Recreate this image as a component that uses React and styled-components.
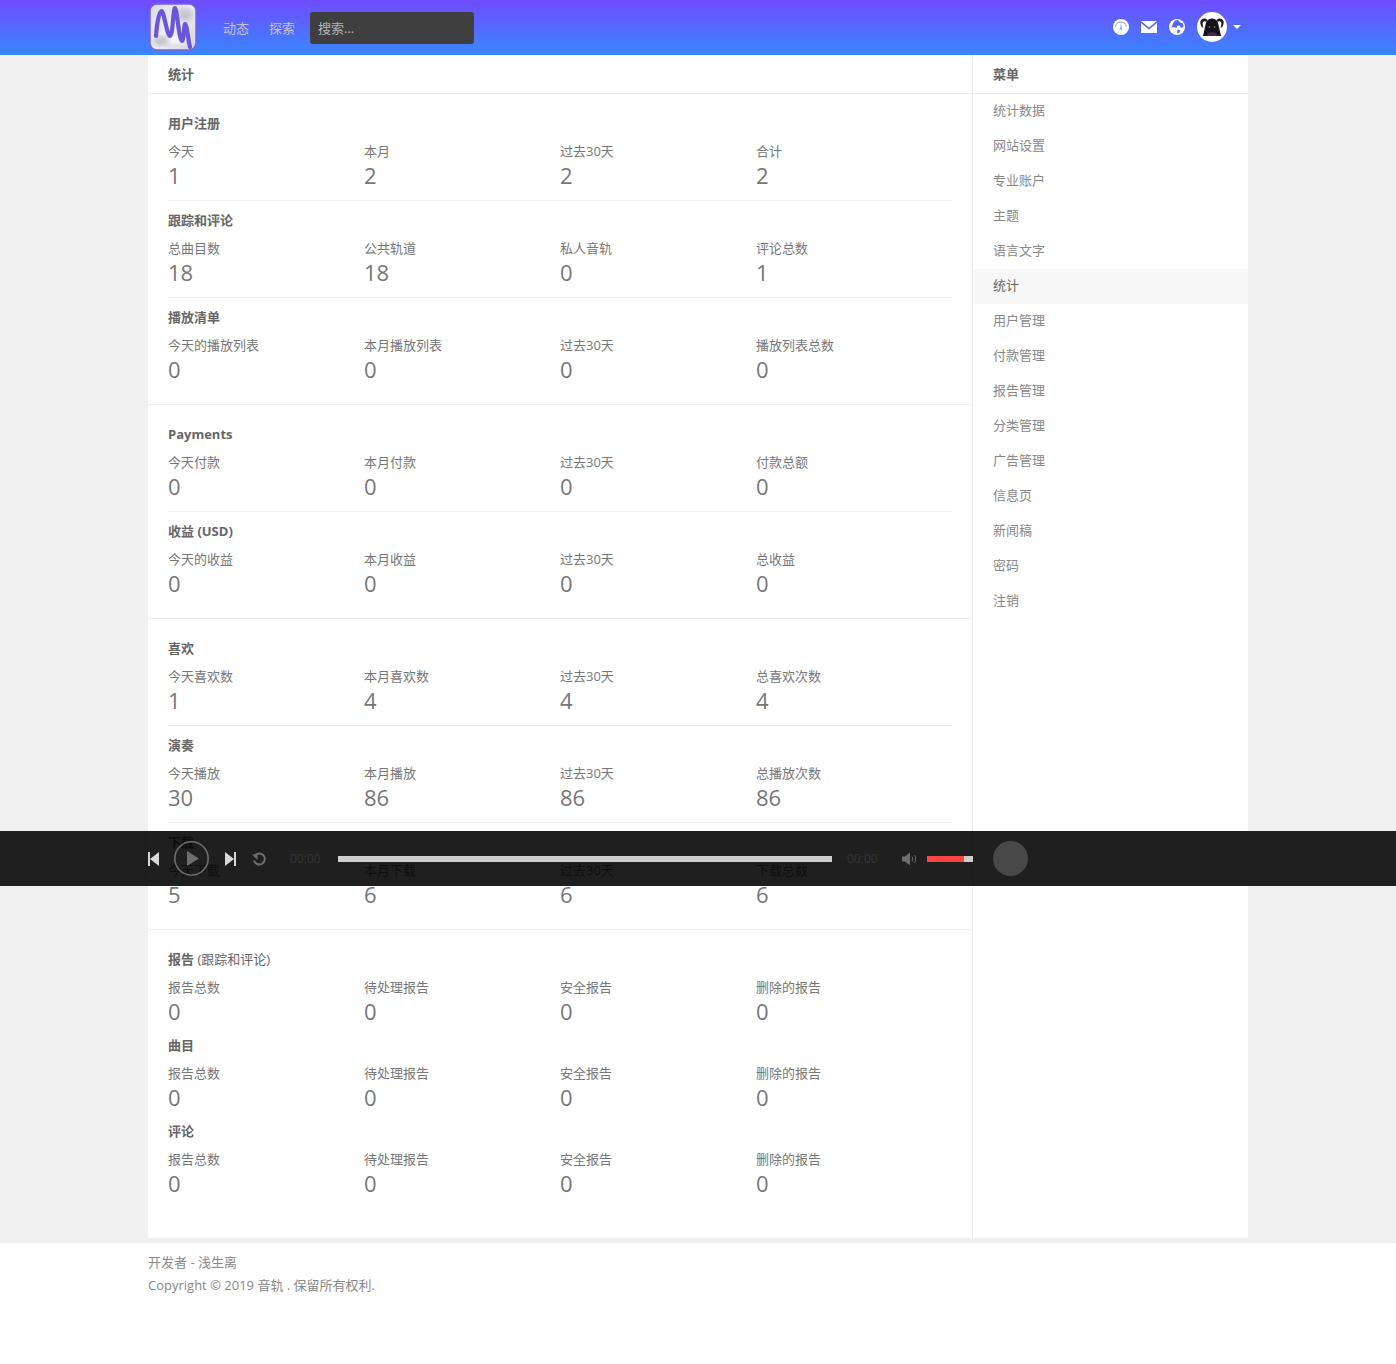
import React from "react";
import styled, { createGlobalStyle } from "styled-components";

const Global = createGlobalStyle`
  html, body { margin: 0; padding: 0; background: #fff; }
  body { font-family: "Open Sans", "Noto Sans CJK SC", sans-serif; font-size: 13px; color: #666; }
  * { box-sizing: border-box; }
`;

const Page = styled.div`
  position: relative;
  min-height: 1364px;
  background: #fff;
`;
const HeaderBar = styled.header`
  height: 55px;
  background: linear-gradient(to bottom, #704bff, #3887ff);
`;
const HeaderInner = styled.div`
  width: 1100px;
  height: 55px;
  margin: 0 auto;
  display: flex;
  align-items: center;
  padding-left: 1px;
  padding-right: 7px;
`;
const Logo = styled.svg`
  width: 48px;
  height: 48px;
  margin-right: 26px;
  margin-bottom: 1px;
  flex: none;
`;
const NavLink = styled.a`
  color: #c4c4d0;
  font-size: 13px;
  line-height: 18px;
  margin-right: 20px;
  margin-top: 1px;
`;
const Search = styled.div`
  width: 164px;
  height: 32px;
  margin-left: -5px;
  background: #3f3f3f;
  border-radius: 3px;
  color: #b4b4b4;
  font-size: 13px;
  line-height: 33px;
  padding-left: 8px;
`;
const HeaderRight = styled.div`
  margin-left: auto;
  margin-bottom: 1px;
  display: flex;
  align-items: center;
  gap: 12px;
`;
const TopIcon = styled.svg`
  width: 16px;
  height: 16px;
  display: block;
`;
const UserMenu = styled.div`
  display: flex;
  align-items: center;
  gap: 6px;
`;
const Avatar = styled.svg`
  width: 30px;
  height: 30px;
  display: block;
`;
const Caret = styled.span`
  width: 0;
  height: 0;
  border-left: 4px solid transparent;
  border-right: 4px solid transparent;
  border-top: 4px solid #fff;
`;

const Backdrop = styled.div`
  background: #f0f0f0;
  padding-bottom: 5px;
`;
const Layout = styled.div`
  width: 1100px;
  margin: 0 auto;
  display: flex;
  background: #fff;
`;
const Main = styled.main`
  width: 825px;
  border-right: 1px solid #efefef;
`;
const Side = styled.aside`
  width: 275px;
`;
const PanelTitle = styled.div`
  height: 39px;
  line-height: 38px;
  padding-left: 20px;
  font-weight: 700;
  font-size: 13px;
  color: #666;
  border-bottom: 1px solid #efefef;
`;
const Section = styled.section`
  padding: 10px 20px ${(p) => (p.$last ? "40px" : "10px")};
  border-bottom: ${(p) => (p.$last ? "none" : "1px solid #efefef")};
`;
const Group = styled.div`
  padding: 9px 0 ${(p) => (p.$compact ? "1px" : "11px")};
  border-bottom: ${(p) => (p.$rule ? "1px solid #efefef" : "none")};
`;
const GroupTitle = styled.div`
  font-weight: 700;
  font-size: 13px;
  line-height: 20px;
  color: #666;
  margin-bottom: 9px;
`;
const Thin = styled.span`
  font-weight: 400;
`;
const Stats = styled.div`
  display: grid;
  grid-template-columns: repeat(4, 196px);
`;
const Label = styled.div`
  font-size: 13px;
  line-height: 18px;
  color: #777;
`;
const Value = styled.div`
  font-size: 22px;
  line-height: 28px;
  margin-top: 1px;
  color: #777;
`;
const MenuItem = styled.a`
  display: block;
  height: 35px;
  line-height: 33px;
  padding-left: 20px;
  font-size: 13px;
  color: ${(p) => (p.$active ? "#666" : "#888")};
  background: ${(p) => (p.$active ? "#f7f7f7" : "transparent")};
`;
const Footer = styled.footer`
  width: 1100px;
  margin: 0 auto;
  padding-top: 8px;
  color: #888;
  font-size: 13px;
`;
const FooterLine = styled.div`
  line-height: 23px;
`;

const Player = styled.div`
  position: absolute;
  top: 831px;
  left: 0;
  right: 0;
  height: 55px;
  background: rgba(0, 0, 0, 0.88);
`;
const PlayerInner = styled.div`
  width: 1100px;
  height: 55px;
  margin: 0 auto;
  display: flex;
  align-items: center;
`;
const SkipIcon = styled.svg`
  width: 11px;
  height: 14px;
  flex: none;
  margin-left: ${(p) => p.$ml || 0}px;
`;
const PlayIcon = styled.svg`
  width: 35px;
  height: 35px;
  flex: none;
  margin-left: 15px;
`;
const RepeatIcon = styled.svg`
  width: 16px;
  height: 16px;
  flex: none;
  margin-left: 15px;
`;
const Time = styled.span`
  color: #383838;
  font-size: 12px;
  line-height: 18px;
  width: 32px;
  flex: none;
  margin-left: ${(p) => p.$ml}px;
`;
const Track = styled.div`
  width: 494px;
  height: 6px;
  background: #cfcfcf;
  margin-left: 16px;
  flex: none;
`;
const VolumeIcon = styled.svg`
  width: 16px;
  height: 16px;
  flex: none;
  margin-left: 23px;
`;
const VolumeTrack = styled.div`
  width: 46px;
  height: 6px;
  background: #cfcfcf;
  margin-left: 9px;
  flex: none;
`;
const VolumeFill = styled.div`
  width: 37px;
  height: 6px;
  background: #ff4444;
`;
const Disc = styled.div`
  width: 35px;
  height: 35px;
  border-radius: 50%;
  background: #484848;
  margin-left: 20px;
  flex: none;
`;

const sections = [
  [
    { t: "用户注册", s: [["今天", 1], ["本月", 2], ["过去30天", 2], ["合计", 2]] },
    { t: "跟踪和评论", s: [["总曲目数", 18], ["公共轨道", 18], ["私人音轨", 0], ["评论总数", 1]] },
    { t: "播放清单", s: [["今天的播放列表", 0], ["本月播放列表", 0], ["过去30天", 0], ["播放列表总数", 0]] },
  ],
  [
    { t: "Payments", s: [["今天付款", 0], ["本月付款", 0], ["过去30天", 0], ["付款总额", 0]] },
    { t: "收益 (USD)", s: [["今天的收益", 0], ["本月收益", 0], ["过去30天", 0], ["总收益", 0]] },
  ],
  [
    { t: "喜欢", s: [["今天喜欢数", 1], ["本月喜欢数", 4], ["过去30天", 4], ["总喜欢次数", 4]] },
    { t: "演奏", s: [["今天播放", 30], ["本月播放", 86], ["过去30天", 86], ["总播放次数", 86]] },
    { t: "下载", s: [["今天下载", 5], ["本月下载", 6], ["过去30天", 6], ["下载总数", 6]] },
  ],
];
const reportStats = [["报告总数", 0], ["待处理报告", 0], ["安全报告", 0], ["删除的报告", 0]];
const menu = ["统计数据", "网站设置", "专业账户", "主题", "语言文字", "统计", "用户管理", "付款管理", "报告管理", "分类管理", "广告管理", "信息页", "新闻稿", "密码", "注销"];

const StatGrid = ({ items }) => (
  <Stats>
    {items.map(([l, v], i) => (
      <div key={i}>
        <Label>{l}</Label>
        <Value>{v}</Value>
      </div>
    ))}
  </Stats>
);

export default function App() {
  return (
    <Page>
      <Global />
      <HeaderBar>
        <HeaderInner>
          <Logo viewBox="0 0 48 48">
            <defs>
              <linearGradient id="lg" x1="0" y1="0" x2="1" y2="1">
                <stop offset="0" stopColor="#dcdbe4" />
                <stop offset="0.5" stopColor="#eeeef3" />
                <stop offset="1" stopColor="#d4d3dc" />
              </linearGradient>
              <filter id="soft"><feGaussianBlur stdDeviation="2.5" /></filter>
            </defs>
            <rect x="1" y="1" width="46" height="46" rx="7" fill="url(#lg)" stroke="#7a62dc" strokeWidth="1.5" />
            <ellipse cx="36" cy="12" rx="8" ry="7" fill="#c6c5d2" filter="url(#soft)" />
            <ellipse cx="12" cy="38" rx="8" ry="5" fill="#c4c4cc" filter="url(#soft)" />
            <ellipse cx="26" cy="36" rx="6" ry="4" fill="#fbfbfd" filter="url(#soft)" />
            <path d="M7 33 C8 20 10 8 12.500 8 C15 8 18 33 21 33 C24 33 24 5 26 5 C28 5 30 38 33 38 C35 38 35 21 36 21 C38 21 39 36 41 44" fill="none" stroke="#6c55d8" strokeWidth="4.200" strokeLinecap="round" strokeLinejoin="round" />
          </Logo>
          <NavLink>动态</NavLink>
          <NavLink>探索</NavLink>
          <Search>搜索...</Search>
          <HeaderRight>
            <TopIcon viewBox="0 0 16 16">
              <circle cx="8" cy="8" r="8" fill="#fff" />
              <path d="M2.600 7.500A5.500 5.500 0 0 1 13.400 7.500" fill="none" stroke="#7c78ff" strokeWidth=".9" />
              <path d="M7.300 10.500 8 4l.7 6.500z" fill="#5a66ff" />
            </TopIcon>
            <TopIcon viewBox="0 0 16 16">
              <path fill="#fff" d="M0 2h16L8 8.500zM0 4v10h16V4L8 10.500z" />
            </TopIcon>
            <TopIcon viewBox="0 0 16 16">
              <circle cx="8" cy="8" r="8" fill="#fff" />
              <path fill="#5566ff" d="M6 1.500 9 1l1.500 2L14 4.500 14.500 8 12 9 10.500 6.500 8 7l-.5 2L5 8 2.500 8.500 4 4.500zM8.500 10.500l2.500.5-.5 2.500L8 14.500z" />
            </TopIcon>
            <UserMenu>
              <Avatar viewBox="0 0 30 30">
                <circle cx="15" cy="15" r="15" fill="#fff" />
                <path d="M3.500 9C5 5.500 9 6 10.500 8L9.500 10C8 9 6.500 9 5.800 10.500 5.200 12 6 14 6.500 16L4.800 15C3.500 13 3 11 3.500 9zM26.500 9C25 5.500 21 6 19.500 8L20.500 10C22 9 23.500 9 24.200 10.500 24.800 12 24 14 23.500 16L25.200 15C26.500 13 27 11 26.500 9z" fill="#241824" />
                <path d="M15 6.500c-4 0-6 3-6.500 6.500L6 24h18L21.500 13C21 9.500 19 6.500 15 6.500z" fill="#1a111e" />
                <path d="M10.500 22c1-2.500 8-2.500 9 0l.8 2H9.700z" fill="#4b2a45" />
                <circle cx="12.500" cy="15" r=".8" fill="#7fa88f" />
                <circle cx="17.500" cy="15" r=".8" fill="#7fa88f" />
              </Avatar>
              <Caret />
            </UserMenu>
          </HeaderRight>
        </HeaderInner>
      </HeaderBar>

      <Backdrop>
        <Layout>
          <Main>
            <PanelTitle>统计</PanelTitle>
            {sections.map((groups, si) => (
              <Section key={si}>
                {groups.map((g, gi) => (
                  <Group key={gi} $rule={gi < groups.length - 1}>
                    <GroupTitle>{g.t}</GroupTitle>
                    <StatGrid items={g.s} />
                  </Group>
                ))}
              </Section>
            ))}
            <Section $last>
              <Group $compact>
                <GroupTitle>
                  报告 <Thin>(跟踪和评论)</Thin>
                </GroupTitle>
                <StatGrid items={reportStats} />
              </Group>
              <Group $compact>
                <GroupTitle>曲目</GroupTitle>
                <StatGrid items={reportStats} />
              </Group>
              <Group $compact>
                <GroupTitle>评论</GroupTitle>
                <StatGrid items={reportStats} />
              </Group>
            </Section>
          </Main>
          <Side>
            <PanelTitle>菜单</PanelTitle>
            {menu.map((m, i) => (
              <MenuItem key={i} $active={i === 5}>
                {m}
              </MenuItem>
            ))}
          </Side>
        </Layout>
      </Backdrop>

      <Footer>
        <FooterLine>开发者 - 浅生离</FooterLine>
        <FooterLine>Copyright © 2019 音轨 . 保留所有权利.</FooterLine>
      </Footer>

      <Player>
        <PlayerInner>
          <SkipIcon viewBox="0 0 11 14">
            <path fill="#d8d8d8" d="M0 0h2v14H0zM11 0v14L2 7z" />
          </SkipIcon>
          <PlayIcon viewBox="0 0 35 35">
            <circle cx="17.500" cy="17.500" r="16.700" fill="none" stroke="#6e6e6e" strokeWidth="1.600" />
            <path fill="#6e6e6e" d="M13 10l12 7.500L13 25z" />
          </PlayIcon>
          <SkipIcon viewBox="0 0 11 14" $ml={16}>
            <path fill="#d8d8d8" d="M9 0h2v14H9zM0 0v14l9-7z" />
          </SkipIcon>
          <RepeatIcon viewBox="0 0 16 16">
            <path fill="none" stroke="#6e6e6e" strokeWidth="2" d="M4 4.500A5.500 5.500 0 1 1 3 9.500" />
            <path fill="#6e6e6e" d="M1 3.500h5.500V9z" />
          </RepeatIcon>
          <Time $ml={23}>00:00</Time>
          <Track />
          <Time $ml={15}>00:00</Time>
          <VolumeIcon viewBox="0 0 16 16">
            <path fill="#6e6e6e" d="M0 5.500h3L8 1.500v13L3 10.500H0z" />
            <path fill="none" stroke="#6e6e6e" strokeWidth="1" d="M10 5.500c1 1.500 1 3.500 0 5M12.500 4c1.500 2.500 1.500 5.500 0 8" />
          </VolumeIcon>
          <VolumeTrack>
            <VolumeFill />
          </VolumeTrack>
          <Disc />
        </PlayerInner>
      </Player>
    </Page>
  );
}
